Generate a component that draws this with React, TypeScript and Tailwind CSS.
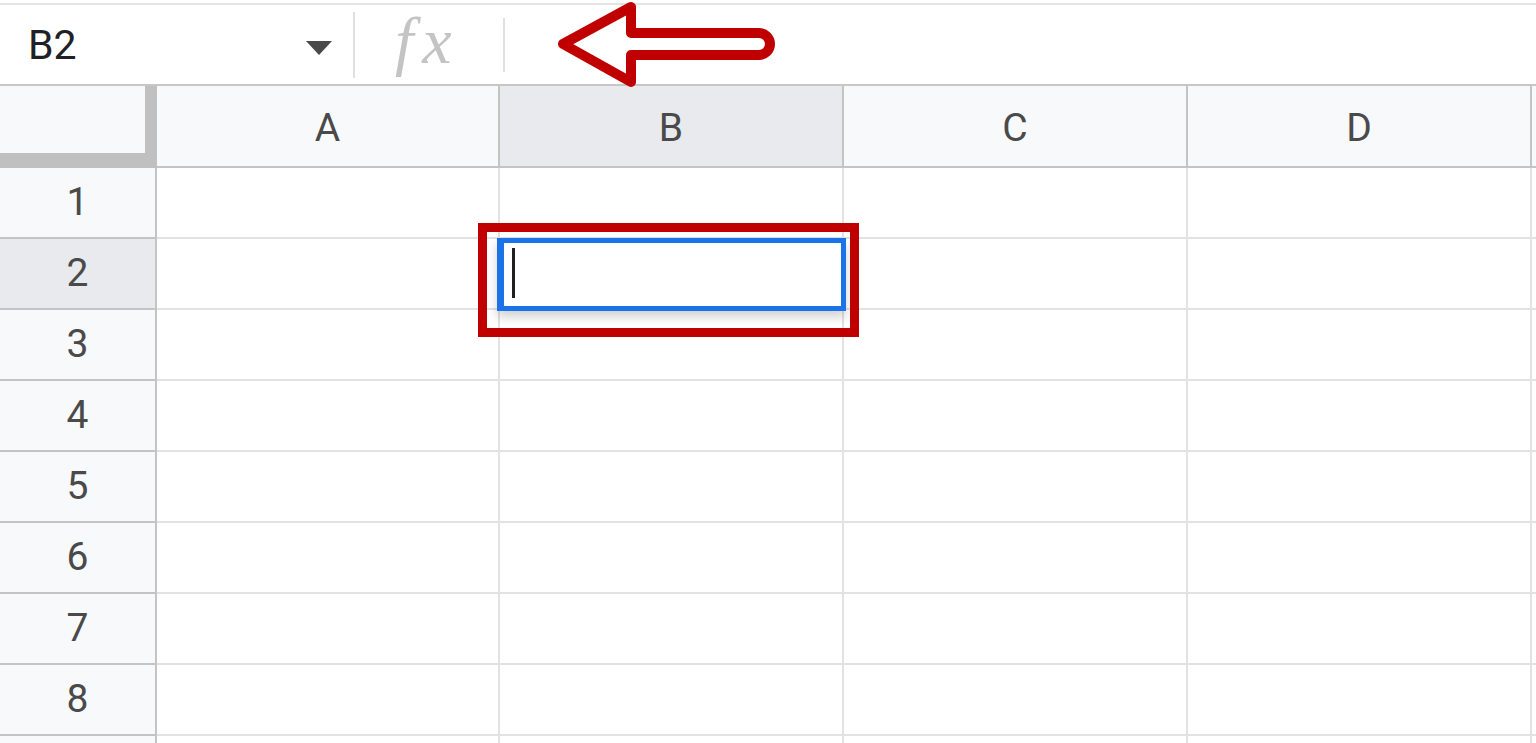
import React from 'react';

const cols = ['A', 'B', 'C', 'D'];
const rows = [1, 2, 3, 4, 5, 6, 7, 8, 9];

export default function App() {
  return (
    <div
      className="relative w-[1536px] h-[743px] overflow-hidden bg-white"
      style={{ fontFamily: 'Roboto, "Liberation Sans", Arial, sans-serif' }}
    >
      {/* formula bar */}
      <div className="h-[3px] bg-white" />
      <div className="h-[2px] bg-[#e3e3e3]" />
      <div className="flex items-center h-[81px] border-b-2 border-[#c7c7c7] bg-white">
        <div className="w-[306px] pl-[28px] pt-[2px] text-[41px] leading-none text-[#202124]">B2</div>
        <svg width="26" height="14" viewBox="0 0 26 14" className="mt-[6px]">
          <path d="M0 0 L26 0 L13 14 Z" fill="#4a4a4a" />
        </svg>
        <div className="ml-[21px] w-[2px] h-[66px] bg-[#e0e0e0]" />
        <div
          className="ml-[40px] w-[108px] text-[66px] leading-none italic tracking-[9px] text-[#c4c4c4] -mt-[8px]"
          style={{ fontFamily: '"Liberation Serif", "DejaVu Serif", serif' }}
        >
          fx
        </div>
        <div className="w-[2px] h-[54px] bg-[#e0e0e0]" />
      </div>

      {/* grid */}
      <div className="grid grid-cols-[157px_343px_344px_344px_344px_1fr] text-[39px] text-[#4a4a4a]">
        <div className="h-[82px] bg-[#c0c0c0]">
          <div className="w-[145px] h-[67px] bg-[#f8f9fa]" />
        </div>
        {cols.map(c => (
          <div
            key={c}
            className={`h-[82px] pt-[4px] flex items-center justify-center border-r-2 border-b-2 border-[#c4c4c4] ${
              c === 'B' ? 'bg-[#e8eaed]' : 'bg-[#f8f9fa]'
            }`}
          >
            {c}
          </div>
        ))}
        <div className="h-[82px] border-b-2 border-[#c4c4c4] bg-[#f8f9fa]" />

        {rows.map(r => (
          <React.Fragment key={r}>
            <div
              className={`h-[71px] flex items-center justify-center border-r-2 border-b-2 border-[#c4c4c4] ${
                r === 2 ? 'bg-[#e8eaed]' : 'bg-[#f8f9fa]'
              }`}
            >
              {r < 9 ? r : ''}
            </div>
            {cols.map(c => (
              <div key={c} className="h-[71px] border-r-2 border-b-2 border-[#e2e2e2] bg-white" />
            ))}
            <div className="h-[71px] border-b-2 border-[#e2e2e2] bg-white" />
          </React.Fragment>
        ))}
      </div>

      {/* active cell editor */}
      <div className="absolute left-[497px] top-[238px] w-[349px] h-[73px] border-[5px] border-l-[7px] border-[#1a73e8] bg-white shadow-[0_6px_10px_rgba(0,0,0,0.18)]">
        <div className="ml-[8px] mt-[5px] w-[3px] h-[50px] bg-[#202020]" />
      </div>

      {/* annotations */}
      <div className="absolute left-[478px] top-[223px] w-[381px] h-[114px] border-[9px] border-[#c00000]" />
      <svg className="absolute left-0 top-0 pointer-events-none" width="1536" height="100">
        <path
          d="M563 44 L631 7 L631 33 L759 33 A11 11 0 0 1 759 55 L631 55 L631 82 Z"
          fill="none"
          stroke="#c00000"
          strokeWidth="10"
          strokeLinejoin="round"
        />
      </svg>
    </div>
  );
}
